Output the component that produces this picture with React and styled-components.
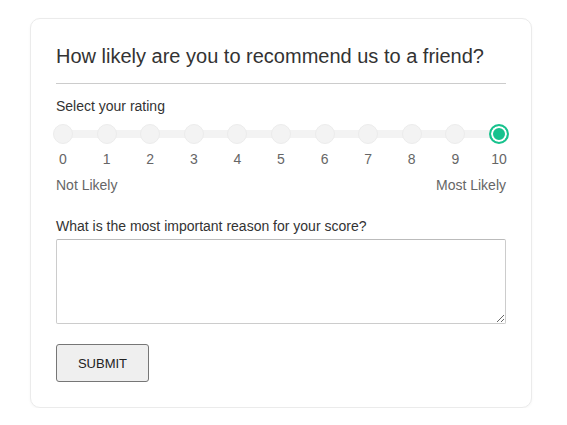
import React, { useState } from "react";
import styled, { createGlobalStyle } from "styled-components";

const Global = createGlobalStyle`
  html, body { margin: 0; padding: 0; background: #fff; }
  body { font-family: Arial, "Liberation Sans", sans-serif; color: #333; }
  * { box-sizing: border-box; }
`;

const Card = styled.div`
  width: 502px;
  margin: 18px 0 0 30px;
  padding: 25px;
  border: 1px solid #ebebeb;
  border-radius: 10px;
  box-shadow: 0 1px 3px rgba(0,0,0,0.04);
  background: #fff;
`;

const Title = styled.h2`
  margin: 0;
  font-size: 20px;
  font-weight: 400;
  line-height: 24px;
  color: #333;
  padding-bottom: 15px;
  border-bottom: 1px solid #ccc;
`;

const Label = styled.div`
  font-size: 14px;
  line-height: 16px;
  color: #333;
  margin-top: ${(p) => p.$mt}px;
`;

const Scale = styled.div`
  position: relative;
  display: flex;
  justify-content: space-between;
  margin-top: 10px;
`;

const Track = styled.div`
  position: absolute;
  left: 7px;
  right: 7px;
  top: 6px;
  height: 8px;
  background: #f3f3f3;
`;

const Item = styled.label`
  position: relative;
  width: 14px;
  display: flex;
  flex-direction: column;
  align-items: center;
  cursor: pointer;
`;

const Dot = styled.span`
  flex: none;
  width: 20px;
  height: 20px;
  border-radius: 50%;
  background: ${(p) => (p.$on ? "#17c28d" : "#f3f3f3")};
  border: ${(p) => (p.$on ? "2px solid #17c28d" : "1px solid #ececec")};
  box-shadow: ${(p) => (p.$on ? "inset 0 0 0 2px #fff" : "none")};
`;

const Num = styled.span`
  margin-top: 7px;
  font-size: 14px;
  line-height: 16px;
  color: #666;
  white-space: nowrap;
`;

const Ends = styled.div`
  display: flex;
  justify-content: space-between;
  margin-top: 10px;
  font-size: 14px;
  line-height: 16px;
  color: #666;
`;

const Area = styled.textarea`
  display: block;
  width: 100%;
  height: 85px;
  margin-top: 5px;
  border: 1px solid #ccc;
  border-top-color: #bbb;
  border-radius: 2px;
  font-family: inherit;
  font-size: 13px;
  padding: 6px;
`;

const Button = styled.button`
  display: block;
  margin-top: 20px;
  height: 38px;
  width: 93px;
  padding: 0;
  font-family: Arial, "Liberation Sans", sans-serif;
  font-size: 13px;
  color: #222;
  background: #efefef;
  border: 1px solid #767676;
  border-radius: 3px;
  cursor: pointer;
`;

export default function App() {
  const [rating, setRating] = useState(10);
  return (
    <>
      <Global />
      <Card>
        <Title>How likely are you to recommend us to a friend?</Title>
        <Label $mt={14}>Select your rating</Label>
        <Scale>
          <Track />
          {Array.from({ length: 11 }, (_, i) => (
            <Item key={i} onClick={() => setRating(i)}>
              <Dot $on={rating === i} />
              <Num>{i}</Num>
            </Item>
          ))}
        </Scale>
        <Ends>
          <span>Not Likely</span>
          <span>Most Likely</span>
        </Ends>
        <Label $mt={25}>What is the most important reason for your score?</Label>
        <Area />
        <Button>SUBMIT</Button>
      </Card>
    </>
  );
}
